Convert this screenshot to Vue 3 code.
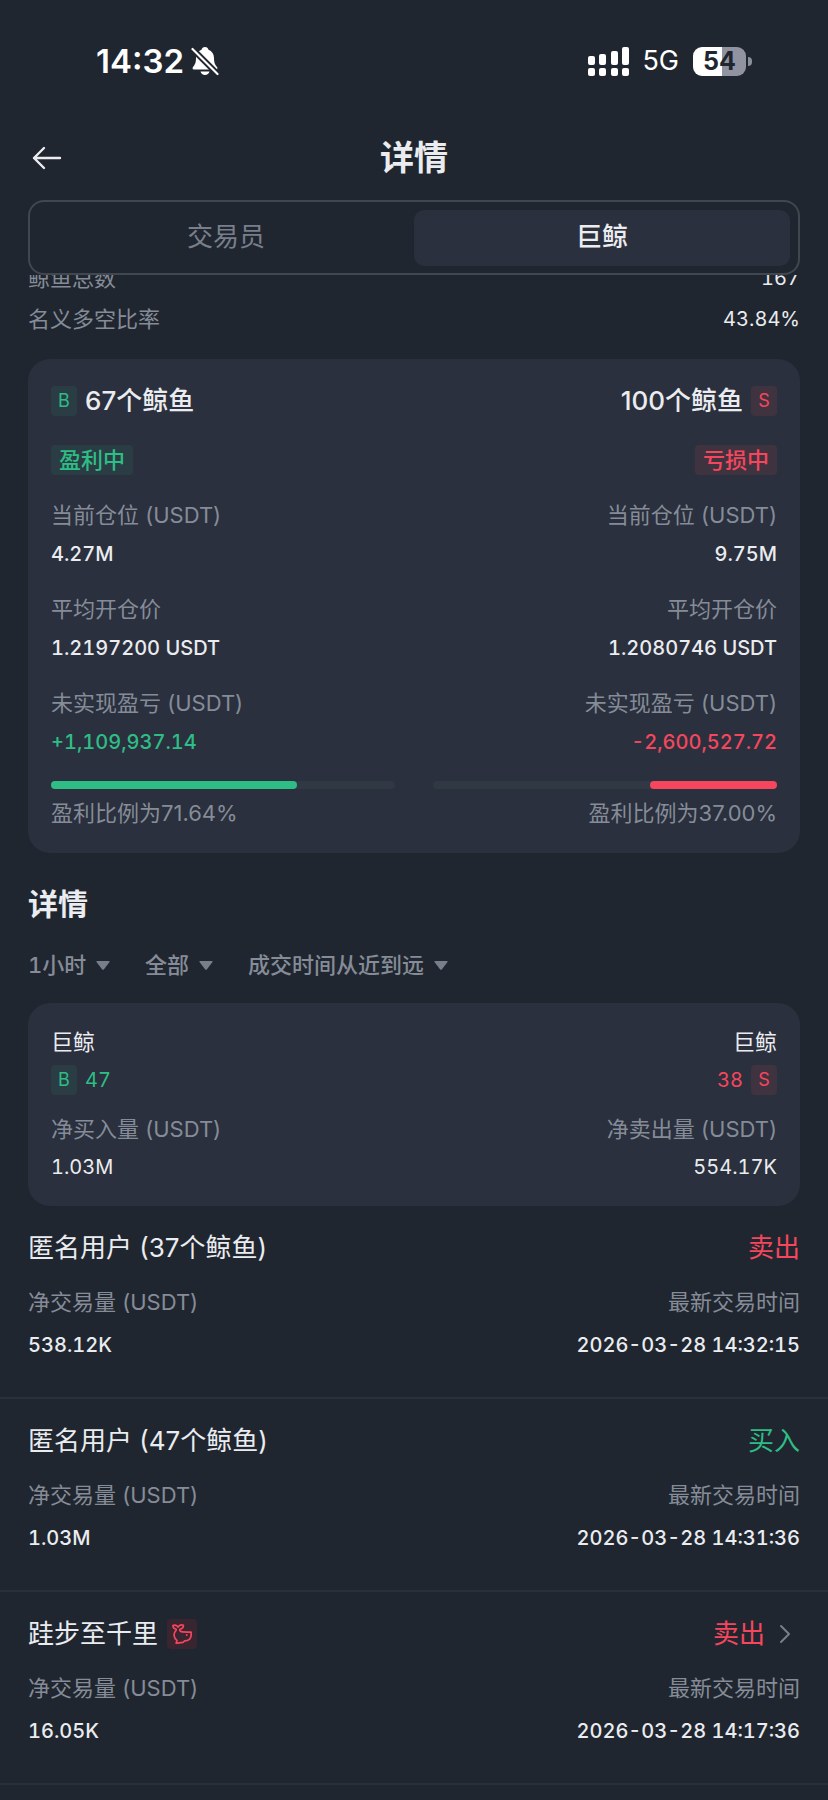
<script setup>
import { ref } from 'vue'

const tabs = ['交易员', '巨鲸']
const activeTab = ref('巨鲸')

const summary = [
  { label: '鲸鱼总数', value: '167' },
  { label: '名义多空比率', value: '43.84%' },
]

const sides = [
  {
    key: 'buy', badge: 'B', title: '67个鲸鱼', state: '盈利中',
    position: '4.27M', price: '1.2197200 USDT', pnl: '+1,109,937.14', ratio: '71.64',
  },
  {
    key: 'sell', badge: 'S', title: '100个鲸鱼', state: '亏损中',
    position: '9.75M', price: '1.2080746 USDT', pnl: '-2,600,527.72', ratio: '37.00',
  },
]

const filters = [
  { name: '时间范围', value: '1小时' },
  { name: '方向', value: '全部' },
  { name: '排序', value: '成交时间从近到远' },
]

const flows = [
  { key: 'buy', badge: 'B', count: '47', label: '净买入量 (USDT)', value: '1.03M' },
  { key: 'sell', badge: 'S', count: '38', label: '净卖出量 (USDT)', value: '554.17K' },
]

const trades = [
  { user: '匿名用户 (37个鲸鱼)', side: 'sell', action: '卖出', volume: '538.12K', time: '2026-03-28 14:32:15', linked: false },
  { user: '匿名用户 (47个鲸鱼)', side: 'buy', action: '买入', volume: '1.03M', time: '2026-03-28 14:31:36', linked: false },
  { user: '跬步至千里', side: 'sell', action: '卖出', volume: '16.05K', time: '2026-03-28 14:17:36', linked: true },
]
</script>

<template>
  <div class="page">
    <div class="status">
      <div class="status-left">
        <span class="clock">14:32</span>
        <svg class="bell" viewBox="0 0 28 30" aria-hidden="true">
          <path fill="#fff" d="M14 1c1.900 0 3.200 1.200 3.500 2.700 3.500 1.300 5.500 4.300 5.500 8.300 0 5 1.300 7 3 9 .7.900.6 2.500-.8 2.500H2.800c-1.400 0-1.500-1.600-.8-2.500 1.700-2 3-4 3-9 0-4 2-7 5.500-8.300C10.800 2.200 12.100 1 14 1ZM9.500 25.500h9c-.5 2.200-2.300 3.500-4.500 3.500s-4-1.300-4.500-3.500Z" />
          <path stroke="#20262f" stroke-width="6" d="M0 1.500 28 29.500" />
          <path stroke="#fff" stroke-width="2.200" stroke-linecap="round" d="M1.500 3 26.500 28" />
        </svg>
      </div>
      <div class="status-right">
        <svg class="signal" viewBox="0 0 42 29" fill="#fff" aria-hidden="true">
          <rect x="0" y="9" width="7" height="9" rx="2" /><rect x="0" y="21" width="7" height="8" rx="2" />
          <rect x="11" y="7" width="7" height="11" rx="2" /><rect x="11" y="21" width="7" height="8" rx="2" />
          <rect x="23" y="4" width="7" height="14" rx="2" /><rect x="23" y="21" width="7" height="8" rx="2" />
          <rect x="34" y="0" width="7" height="18" rx="2" /><rect x="34" y="21" width="7" height="8" rx="2" />
        </svg>
        <span class="network">5G</span>
        <div class="battery"><span class="battery-body">54</span><span class="battery-tip"></span></div>
      </div>
    </div>

    <header class="header">
      <button class="back" type="button" aria-label="返回">
        <svg viewBox="0 0 30 24" aria-hidden="true">
          <path d="M28 12H2M12 2 2 12l10 10" fill="none" stroke="#eaecef" stroke-width="2.400" stroke-linecap="round" stroke-linejoin="round" />
        </svg>
      </button>
      <h1>详情</h1>
    </header>

    <nav class="tabs">
      <button
        v-for="tab in tabs" :key="tab" type="button" class="tab"
        :class="{ active: tab === activeTab }" @click="activeTab = tab"
      >{{ tab }}</button>
    </nav>

    <main class="content">
      <div class="summary">
        <div v-for="row in summary" :key="row.label" class="summary-row">
          <span class="label">{{ row.label }}</span>
          <span class="number">{{ row.value }}</span>
        </div>
      </div>

      <section class="card compare">
        <div v-for="s in sides" :key="s.key" class="side" :class="s.key">
          <div class="side-head"><span class="badge">{{ s.badge }}</span><span>{{ s.title }}</span></div>
          <span class="state">{{ s.state }}</span>
          <div class="metric">
            <div class="label">当前仓位 (USDT)</div>
            <div class="value">{{ s.position }}</div>
          </div>
          <div class="metric">
            <div class="label">平均开仓价</div>
            <div class="value">{{ s.price }}</div>
          </div>
          <div class="metric">
            <div class="label">未实现盈亏 (USDT)</div>
            <div class="value tone">{{ s.pnl }}</div>
          </div>
          <div class="track"><div class="fill" :style="{ width: s.ratio + '%' }"></div></div>
          <div class="label ratio">盈利比例为{{ s.ratio }}%</div>
        </div>
      </section>

      <h2>详情</h2>
      <div class="filters">
        <label v-for="f in filters" :key="f.name" class="filter">
          <select :aria-label="f.name"><option>{{ f.value }}</option></select>
          <svg class="caret" viewBox="0 0 14 9" aria-hidden="true"><path d="M1 0h12q1 0 .5 1L7.800 8.500q-.8.700-1.600 0L.5 1Q0 0 1 0Z" fill="#787f8b" /></svg>
        </label>
      </div>

      <section class="card flow">
        <div v-for="f in flows" :key="f.key" class="side" :class="f.key">
          <div class="flow-name">巨鲸</div>
          <div class="flow-count"><span class="badge">{{ f.badge }}</span><span class="tone">{{ f.count }}</span></div>
          <div class="label flow-label">{{ f.label }}</div>
          <div class="flow-value">{{ f.value }}</div>
        </div>
      </section>

      <ul class="trades">
        <li v-for="t in trades" :key="t.time" class="trade" :class="t.side">
          <div class="row trade-head">
            <div class="user">
              <span>{{ t.user }}</span>
              <span v-if="t.linked" class="whale">
                <svg viewBox="0 0 21 21" fill="none" stroke="#f6465d" stroke-width="1.800" stroke-linejoin="round" aria-hidden="true">
                  <path d="M1 1.500C3 .6 5.500 1.500 6.300 3.300 7.300 1.500 9.800.6 12 1.300c0 2.400-1.400 3.800-3.700 4.200C7.800 7.300 9 8.300 11 8.300c3 .2 5.500.2 9 .1.400 3-.2 6-1.500 7.400-1.500 1.500-3.400 1.900-5.300 1.900-.9 1.500-2.200 2-3.600 1.800-1.300.6-3 .6-5.200.6l.8-2.900C1.800 14.800 1 9.600 4.300 6.600L4.500 5.500C2.400 5 1 3.500 1 1.500Z" />
                  <circle cx="15.500" cy="11.500" r="1" fill="#f6465d" stroke="none" />
                </svg>
              </span>
            </div>
            <div class="action tone">
              <span>{{ t.action }}</span>
              <button v-if="t.linked" type="button" class="more" aria-label="查看">
                <svg viewBox="0 0 12 20" aria-hidden="true"><path d="m2 2 8 8-8 8" fill="none" stroke="#787f8b" stroke-width="2" stroke-linecap="round" stroke-linejoin="round" /></svg>
              </button>
            </div>
          </div>
          <div class="row label trade-label"><span>净交易量 (USDT)</span><span>最新交易时间</span></div>
          <div class="row value trade-value"><span>{{ t.volume }}</span><time>{{ t.time }}</time></div>
        </li>
      </ul>
    </main>
  </div>
</template>

<style>
body {
  margin: 0;
  background: #20262f;
}
</style>

<style scoped>
.page {
  color: #eaecef;
  background: #20262f;
  font-family: Inter, "Noto Sans CJK SC", sans-serif;
  font-size: 22px;
  line-height: 36px;
  overflow: hidden;
}
button, select {
  font: inherit;
  color: inherit;
  background: none;
  border: 0;
  padding: 0;
  margin: 0;
}
svg { display: block; }

.status {
  display: flex;
  justify-content: space-between;
  align-items: center;
  height: 122px;
  padding: 0 76px 0 96px;
  color: #fff;
}
.status-left, .status-right, .battery { display: flex; align-items: center; }
.status-left { gap: 7px; }
.clock { font-size: 33px; font-weight: 600; }
.bell { width: 28px; height: 30px; }
.signal { width: 42px; height: 29px; }
.network { font-size: 27px; margin: 0 14px 0 12px; }
.battery { gap: 2px; }
.battery-body {
  width: 53px;
  height: 29px;
  line-height: 29px;
  border-radius: 9px;
  text-align: center;
  font-size: 25px;
  font-weight: 700;
  color: #20262f;
  background: linear-gradient(90deg, #fff 54%, #9194a0 54%);
}
.battery-tip { width: 4px; height: 9px; border-radius: 0 4px 4px 0; background: #8b8f98; }

.header {
  display: grid;
  grid-template-columns: 48px 1fr 48px;
  align-items: center;
  height: 72px;
  margin-bottom: 6px;
  padding: 0 28px;
}
.back { padding: 4px; }
.back svg { width: 30px; height: 24px; }
h1 { margin: 0; font-size: 34px; line-height: 48px; font-weight: 600; text-align: center; }

.tabs {
  display: grid;
  grid-template-columns: 1fr 1fr;
  margin: 0 28px;
  padding: 8px 8px 7px;
  border: 2px solid #42464f;
  border-radius: 16px;
}
.tab { height: 56px; padding-bottom: 2px; border-radius: 10px; font-size: 26px; color: #787f8b; }
.tab.active { background: #2a303d; color: #eaecef; font-weight: 500; }

.summary { overflow: hidden; padding: 0 28px 19px; }
.summary-row { display: flex; justify-content: space-between; line-height: 41px; }
.summary-row:first-child { margin-top: -17px; }
.label { color: #858c98; }

.card {
  display: grid;
  grid-template-columns: 1fr 1fr;
  gap: 38px;
  margin: 0 28px;
  padding: 24px 23px 22px;
  border-radius: 22px;
  background: #2a303d;
}
.side { display: flex; flex-direction: column; align-items: flex-start; }
.side.sell { align-items: flex-end; }
.side-head, .flow-count { display: flex; align-items: center; gap: 8px; }
.side.sell .side-head, .side.sell .flow-count { flex-direction: row-reverse; }
.side-head { font-size: 26px; font-weight: 500; }
.badge {
  width: 26px;
  height: 30px;
  line-height: 30px;
  border-radius: 4px;
  font-size: 18px;
  font-weight: 400;
  text-align: center;
}
.state { margin: 26px 0 22px; padding: 0 8px; line-height: 30px; border-radius: 4px; font-weight: 500; }
.buy .badge, .buy .state { color: #2ebd85; background: #2a3d45; }
.sell .badge, .sell .state { color: #f6465d; background: #403340; }
.buy .tone { color: #2ebd85; }
.sell .tone { color: #f6465d; }
.number, .value, .flow-value, .flow-count { font-size: 20px; font-variant-numeric: tabular-nums; }
.value { line-height: 42px; font-weight: 500; }
.metric { margin-bottom: 16px; }
.side.sell .metric { text-align: right; }
.track { width: 100%; height: 8px; display: flex; margin: 2px 0 6px; border-radius: 4px; background: #303844; }
.side.sell .track { justify-content: flex-end; }
.fill { border-radius: 4px; background: #2ebd85; }
.side.sell .fill { background: #f6465d; }

h2 { margin: 29px 28px 21px; font-size: 30px; line-height: 44px; font-weight: 700; }
.filters { display: flex; gap: 35px; margin: 0 28px 20px; }
.filter { display: flex; align-items: center; gap: 9px; color: #858c98; }
select { appearance: none; height: 36px; font-weight: 500; font-variant-numeric: tabular-nums; outline: none; }
.caret { width: 14px; height: 9px; }

.flow { padding: 21px 23px 19px; }
.flow-count { line-height: 40px; }
.flow-label { margin-top: 11px; }
.flow-value { line-height: 40px; }

.trades { list-style: none; margin: 0; padding: 0; }
.trade { padding: 22px 28px 31px; border-bottom: 2px solid #2a2f39; }
.row, .user, .action { display: flex; align-items: center; }
.row { justify-content: space-between; }
.trade-head { font-size: 26px; line-height: 40px; }
.trade-label { margin: 16px 0 4px; }
.user { gap: 9px; }
.whale { padding: 5px; border-radius: 4px; background: #38252f; }
.whale svg { width: 20px; height: 20px; }
.more { padding: 0 9px 0 14px; }
.more svg { width: 12px; height: 20px; }
</style>
